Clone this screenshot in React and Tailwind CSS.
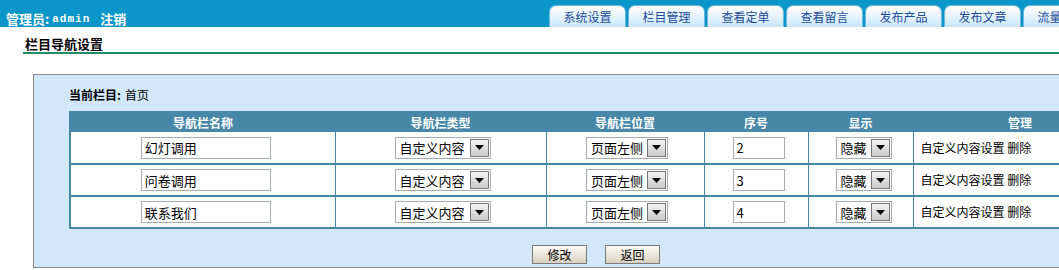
import React from 'react'

const tabs = ['系统设置', '栏目管理', '查看定单', '查看留言', '发布产品', '发布文章', '流量统计']

const rows = [
  { name: '幻灯调用', seq: '2' },
  { name: '问卷调用', seq: '3' },
  { name: '联系我们', seq: '4' },
]

const font = "font-['Noto_Sans_CJK_SC','Noto_Sans',sans-serif]"

const FakeSelect = ({ value, width }) => (
  <div className={`inline-flex items-center h-[22px] border border-[#a5acb5] bg-white ${width}`}>
    <span className="flex-1 pl-[4px] text-[13px] leading-none text-black text-left whitespace-nowrap">{value}</span>
    <span className="shrink-0 flex items-center justify-center w-[19px] h-[18px] mr-[1px] border border-[#777] bg-gradient-to-b from-[#f4f4f4] to-[#c8c8c8]">
      <svg width="9" height="5" viewBox="0 0 9 5">
        <path d="M0 0h9L4.5 5z" fill="#000" />
      </svg>
    </span>
  </div>
)

const TextBox = ({ value, width }) => (
  <div className={`inline-flex items-center h-[22px] border border-[#a5acb5] bg-white pl-[3px] text-[13px] leading-none text-black text-left ${width}`}>
    {value}
  </div>
)

export default function App() {
  return (
    <div className={`w-[1059px] h-[270px] overflow-hidden bg-white ${font}`}>
      {/* top bar */}
      <div className="flex items-end h-[27px] bg-[#0a96c8]">
        <div className="shrink-0 w-[549px] flex items-end pl-[6px] pb-[2px] text-white font-bold text-[13px] leading-none whitespace-nowrap">
          <span>管理员:</span>
          <span className="font-['Liberation_Mono',monospace] text-[11px] tracking-[1px] ml-[3px]">admin</span>
          <span className="ml-[10px]">注销</span>
        </div>
        <div className="shrink-0 flex gap-[2px]">
          {tabs.map((t) => (
            <div
              key={t}
              className="shrink-0 flex items-center justify-center w-[77px] h-[22px] rounded-t-[7px] border border-b-0 border-[#6fb6dc] bg-gradient-to-b from-white to-[#c9e6f8] text-[12px] leading-none text-[#1d4c9a] whitespace-nowrap"
            >
              {t}
            </div>
          ))}
        </div>
      </div>

      {/* title */}
      <div className="ml-[23px] mt-[10px] border-b-2 border-[#1e8c6c] pl-[2px] pb-[2px] text-[13px] font-bold leading-[13px] text-black">
        栏目导航设置
      </div>

      {/* main box */}
      <div className="ml-[33px] mt-[20px] w-[1100px] h-[194px] border border-[#8a8a8a] bg-[#d2e8fa] pl-[35px] pt-[13px]">
        <div className="flex items-center text-[12px] leading-none text-black h-[13px]">
          <span className="font-bold">当前栏目:</span>
          <span className="ml-[4px]">首页</span>
        </div>

        <table className="mt-[10px] w-[1059px] border-collapse border-2 border-[#4787a8] bg-white text-[12px]">
          <thead>
            <tr className="h-[20px] bg-[#4787a8] text-white font-bold">
              <th className="w-[265px] font-bold">导航栏名称</th>
              <th className="w-[211px] font-bold">导航栏类型</th>
              <th className="w-[158px] font-bold">导航栏位置</th>
              <th className="w-[104px] font-bold">序号</th>
              <th className="w-[105px] font-bold">显示</th>
              <th className="font-bold text-left pl-[95px]">管理</th>
            </tr>
          </thead>
          <tbody>
            {rows.map((r) => (
              <tr key={r.name} className="h-[32px] border-b-2 border-[#4787a8] text-center">
                <td>
                  <TextBox value={r.name} width="w-[130px] ml-[6px]" />
                </td>
                <td className="border-l border-[#4787a8]">
                  <FakeSelect value="自定义内容" width="w-[96px] ml-[4px]" />
                </td>
                <td className="border-l border-[#4787a8]">
                  <FakeSelect value="页面左侧" width="w-[82px] ml-[4px]" />
                </td>
                <td className="border-l border-[#4787a8]">
                  <TextBox value={r.seq} width="w-[52px] ml-[5px]" />
                </td>
                <td className="border-l border-[#4787a8]">
                  <FakeSelect value="隐藏" width="w-[56px] ml-[6px]" />
                </td>
                <td className="border-l border-[#4787a8] text-left pl-[7px] text-black">
                  自定义内容设置 删除
                </td>
              </tr>
            ))}
          </tbody>
        </table>

        <div className="flex gap-[18px] ml-[463px] mt-[16px]">
          <button className="w-[55px] h-[19px] border border-[#7a7a7a] bg-gradient-to-b from-[#fbfaf5] to-[#d8d2c0] text-[12px] leading-none text-black">
            修改
          </button>
          <button className="w-[55px] h-[19px] border border-[#7a7a7a] bg-gradient-to-b from-[#fbfaf5] to-[#d8d2c0] text-[12px] leading-none text-black">
            返回
          </button>
        </div>
      </div>
    </div>
  )
}
